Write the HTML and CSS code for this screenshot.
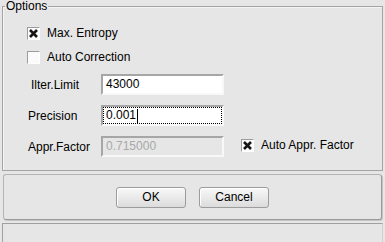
FILE: index.html
```html
<!DOCTYPE html>
<html>
<head>
<meta charset="utf-8">
<link rel="stylesheet" href="styles.css">
</head>
<body>
<fieldset class="options">
  <legend class="options-title">Options</legend>
  <div class="options-body">
    <div class="check-row first">
      <span class="box"><svg width="9" height="9" viewBox="0 0 9 9"><path d="M1 1 L8 8 M8 1 L1 8" stroke="#151515" stroke-width="2.6"/></svg></span>
      <span class="check-label">Max. Entropy</span>
    </div>
    <div class="check-row">
      <span class="box"></span>
      <span class="check-label">Auto Correction</span>
    </div>
    <div class="field-row">
      <span class="field-label shift">Ilter.Limit</span>
      <div class="input">43000</div>
    </div>
    <div class="field-row">
      <span class="field-label">Precision</span>
      <div class="input focused"><span class="focus-ring">0.001<span class="caret"></span></span></div>
    </div>
    <div class="field-row">
      <span class="field-label">Appr.Factor</span>
      <div class="input disabled">0.715000</div>
      <div class="check-row inline">
        <span class="box"><svg width="9" height="9" viewBox="0 0 9 9"><path d="M1 1 L8 8 M8 1 L1 8" stroke="#151515" stroke-width="2.6"/></svg></span>
        <span class="check-label">Auto Appr. Factor</span>
      </div>
    </div>
  </div>
</fieldset>
<div class="button-panel">
  <button class="btn">OK</button>
  <button class="btn">Cancel</button>
</div>
<div class="status-panel"></div>
</body>
</html>
```
FILE: styles.css
```css
html, body {
  margin: 0;
  padding: 0;
  background: #e6e6e6;
  width: 385px;
  height: 242px;
  overflow: hidden;
  font-family: "Liberation Sans", Arial, sans-serif;
  font-size: 12px;
  color: #000;
}

.options {
  margin: 0 2px;
  padding: 0;
  border: 1px solid #a4a4a4;
  box-shadow: inset 1px 1px 0 #f4f4f4;
  height: 171px;
  box-sizing: border-box;
  min-width: 0;
}

.options-title {
  margin-left: 2px;
  padding: 0 1px;
  line-height: 13px;
  font-size: 12px;
}

.options-body {
  padding-left: 24px;
}

.check-row {
  display: flex;
  align-items: center;
  height: 13px;
  margin-top: 11px;
}

.check-row.first {
  margin-top: 14px;
}

.box {
  width: 11px;
  height: 11px;
  border: 1px solid;
  border-color: #9c9c9c #ffffff #ffffff #9c9c9c;
  background: #fbfbfb;
  display: flex;
  align-items: center;
  justify-content: center;
  flex: none;
}

.check-label {
  margin-left: 7px;
  line-height: 13px;
}

.field-row {
  display: flex;
  align-items: center;
  height: 21px;
  margin-top: 10px;
}

.field-label {
  width: 73px;
  padding-left: 1px;
  flex: none;
}

.field-label.shift {
  padding-left: 4px;
  width: 70px;
}

.input {
  width: 119px;
  height: 17px;
  border: 2px solid;
  border-color: #a6a6a6 #f8f8f8 #f8f8f8 #a6a6a6;
  background: #fff;
  line-height: 17px;
  box-sizing: content-box;
  text-indent: 3px;
  flex: none;
}

.input.focused {
  display: flex;
}

.focus-ring {
  flex: 1;
  border: 1px dotted #000;
  line-height: 15px;
  text-indent: 2px;
  display: flex;
  align-items: center;
}

.caret {
  display: inline-block;
  width: 1px;
  height: 14px;
  background: #000;
  margin-left: 1px;
}

.input.disabled {
  background: #e6e6e6;
  color: #a8a8a8;
}

.check-row.inline {
  margin: 0 0 2px 17px;
}

.button-panel {
  margin: 3px 3px 0 3px;
  height: 46px;
  box-sizing: border-box;
  border: 1px solid #b4b4b4;
  border-right-color: #9a9a9a;
  border-bottom-color: #9a9a9a;
  box-shadow: 1px 1px 0 #c4c4c4;
  border-radius: 3px;
  display: flex;
  align-items: center;
  justify-content: center;
  gap: 13px;
}

.btn {
  width: 70px;
  height: 21px;
  margin: 0;
  padding: 0;
  border: 1px solid #9c9c9c;
  border-radius: 3px;
  background: linear-gradient(#f8f8f8, #dcdcdc);
  box-shadow: inset 1px 1px 0 #ffffff;
  font-family: "Liberation Sans", Arial, sans-serif;
  font-size: 12px;
  color: #000;
}

.status-panel {
  margin: 3px 2px 0 2px;
  height: 30px;
  border-top: 1px solid #a0a0a0;
  border-left: 1px solid #a0a0a0;
  border-right: 1px solid #d0d0d0;
}
```
